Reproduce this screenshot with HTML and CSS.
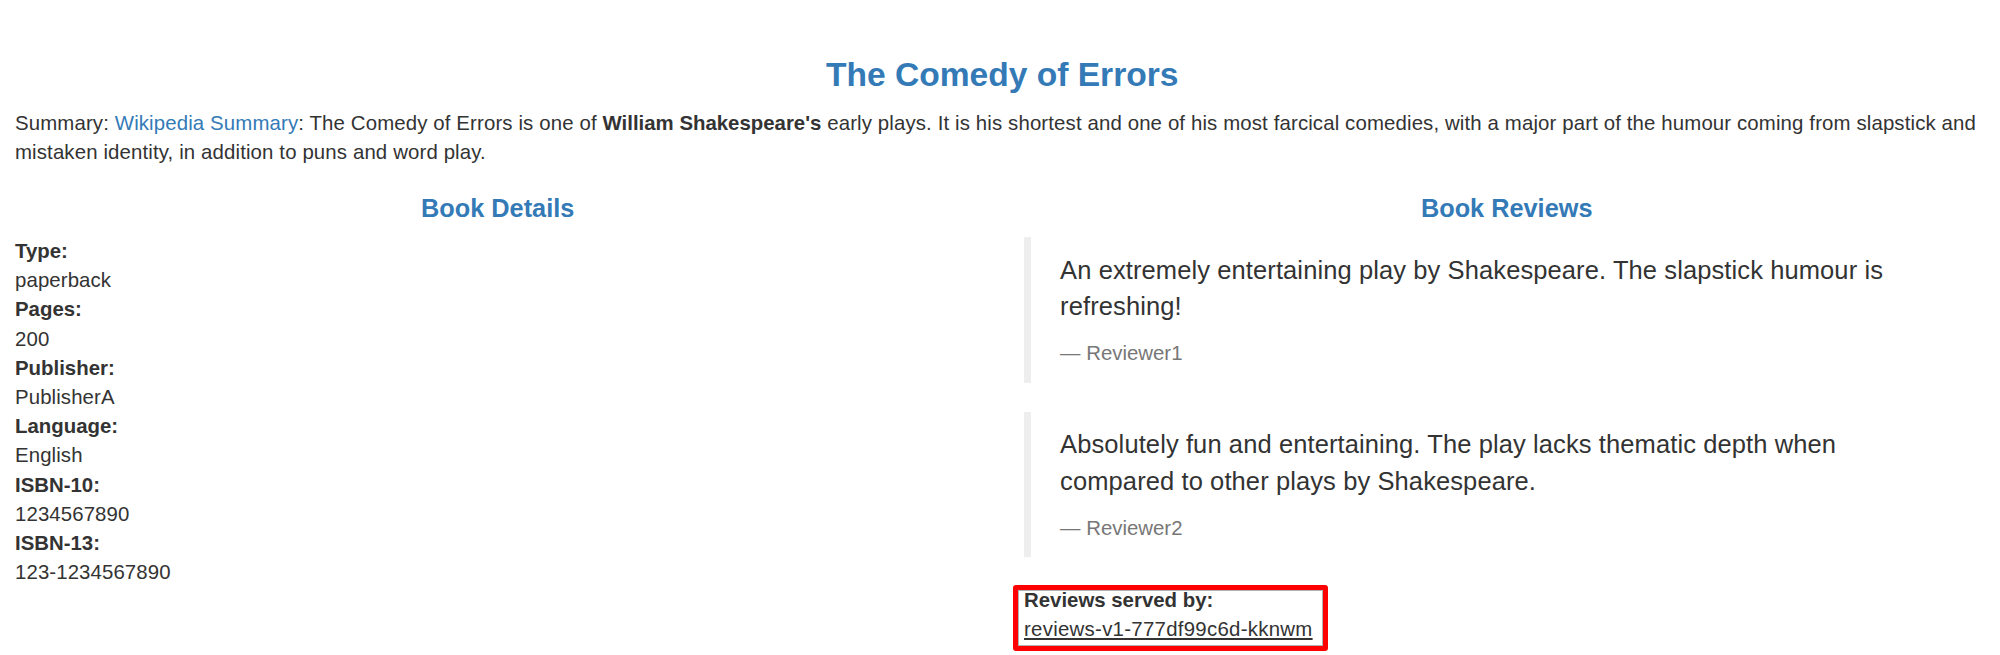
FILE: index.html
```html
<!DOCTYPE html>
<html lang="en">
<head>
<meta charset="utf-8">
<title>Simple Bookstore App</title>
<link rel="stylesheet" href="styles.css">
</head>
<body>
<div class="page">
  <h3 class="title">The Comedy of Errors</h3>
  <p class="summary">Summary: <a class="link" href="#">Wikipedia Summary</a>: The Comedy of Errors is one of <b class="strong">William Shakespeare's</b> early plays. It is his shortest and one of his most farcical comedies, with a major part of the humour coming from slapstick and mistaken identity, in addition to puns and word play.</p>
  <div class="cols">
    <div class="col">
      <h4 class="heading">Book Details</h4>
      <dl class="details">
        <dt>Type:</dt>paperback
        <dt>Pages:</dt>200
        <dt>Publisher:</dt>PublisherA
        <dt>Language:</dt>English
        <dt>ISBN-10:</dt>1234567890
        <dt>ISBN-13:</dt>123-1234567890
      </dl>
    </div>
    <div class="col">
      <h4 class="heading">Book Reviews</h4>
      <blockquote class="review">
        <p class="review-text">An extremely entertaining play by Shakespeare. The slapstick humour is refreshing!</p>
        <small class="reviewer">Reviewer1</small>
      </blockquote>
      <blockquote class="review">
        <p class="review-text">Absolutely fun and entertaining. The play lacks thematic depth when compared to other plays by Shakespeare.</p>
        <small class="reviewer">Reviewer2</small>
      </blockquote>
      <dl class="served">
        <dt>Reviews served by:</dt>
        <u class="pod">reviews-v1-777df99c6d-kknwm</u>
      </dl>
    </div>
  </div>
</div>
</body>
</html>
```

FILE: styles.css
```css
html, body {
  margin: 0;
  padding: 0;
  background: #fff;
}

body {
  font-family: "Liberation Sans", Arial, "Helvetica Neue", Helvetica, sans-serif;
  font-size: 20.4px;
  line-height: 29.1px;
  letter-spacing: 0.1px;
  color: #333;
}

.page {
  padding: 27.3px 10.6px 40px 15px;
}

.title {
  margin: 29.1px 0 14.55px;
  font-size: 33.6px;
  line-height: 38.4px;
  font-weight: 700;
  letter-spacing: 0;
  text-align: center;
  color: #337ab7;
}

.summary {
  margin: 0 0 11.55px;
  letter-spacing: 0.13px;
}

.strong {
  letter-spacing: 0;
}

.link {
  color: #337ab7;
  text-decoration: none;
}

.cols {
  display: grid;
  grid-template-columns: 1fr 1fr;
  column-gap: 43.6px;
}

.col {
  min-width: 0;
}

.heading {
  margin: 14.55px 0;
  font-size: 25.3px;
  line-height: 28.8px;
  font-weight: 700;
  letter-spacing: 0;
  text-align: center;
  color: #337ab7;
}

.details {
  margin: 1.5px 0 29.1px;
  line-height: 29.2px;
}

.details dt,
.served dt {
  font-weight: 700;
  letter-spacing: 0;
}

.review {
  margin: 0 0 29.1px;
  padding: 14.55px 40px 14.55px 29.1px;
  border-left: 7.3px solid #eee;
  font-size: 25.5px;
  line-height: 36.4px;
}

.review-text {
  margin: 0 0 14.55px;
}

.reviewer {
  display: block;
  font-size: 20.4px;
  line-height: 29.1px;
  letter-spacing: 0;
  color: #777;
}

.reviewer::before {
  content: "\2014 \00A0";
}

.served {
  position: relative;
  width: fit-content;
  margin: 0;
}

.pod {
  letter-spacing: 0.28px;
}

.served::after {
  content: "";
  position: absolute;
  left: -11px;
  top: -1px;
  right: -15px;
  bottom: -7px;
  border: 5px solid #f00;
  border-radius: 3px;
  box-shadow: inset 0 0 0 1px rgba(0, 0, 0, 0.3);
}
```
